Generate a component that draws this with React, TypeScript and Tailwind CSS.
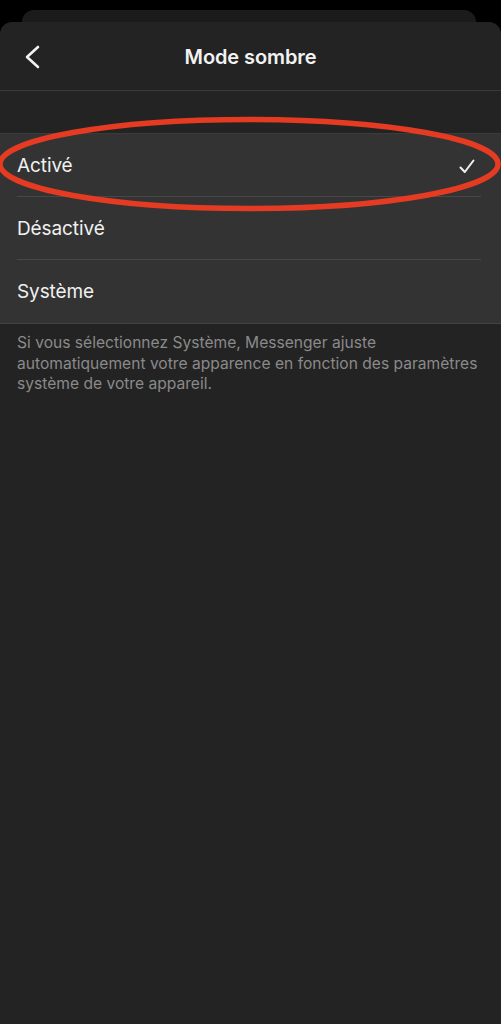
const options = [
  { label: 'Activé', selected: true },
  { label: 'Désactivé', selected: false },
  { label: 'Système', selected: false },
];

export default function App() {
  return (
    <div
      className="relative w-[501px] h-[1024px] bg-black overflow-hidden"
      style={{ fontFamily: 'Inter, "Noto Sans", sans-serif' }}
    >
      {/* Sheet behind */}
      <div className="absolute left-[22px] right-[25px] top-[10px] h-[40px] rounded-[12px] bg-[#1b1b1b]" />

      {/* Main sheet */}
      <div className="absolute inset-x-0 top-[22px] bottom-0 rounded-t-[12px] bg-[#232323] flex flex-col">
        {/* Header */}
        <div className="relative h-[69px] flex items-center justify-center border-b border-[#3a3a3a]">
          <button className="absolute left-[22px] top-[23px] text-white">
            <svg width="20" height="24" viewBox="0 0 20 24" fill="none">
              <path d="M16 2 L5 12 L16 22" stroke="#f2f2f2" strokeWidth="2.6" strokeLinecap="round" strokeLinejoin="round" />
            </svg>
          </button>
          <h1 className="pt-[2px] text-[20px] font-semibold text-[#f2f2f2] tracking-[-0.1px]">Mode sombre</h1>
        </div>

        {/* Spacer band */}
        <div className="h-[42px]" />

        {/* Options group */}
        <div className="bg-[#333333] border-t border-[#3b3b3b] border-b border-b-[#444444]">
          {options.map((opt, i) => {
            const last = i === options.length - 1;
            return (
              <div key={opt.label} className="pl-[17px] pr-[20px]">
                <div
                  className={
                    last
                      ? 'h-[63px] pt-[2px] flex items-center justify-between'
                      : 'h-[63px] pt-[2px] flex items-center justify-between border-b border-[#474747]'
                  }
                >
                  <span className="text-[19px] text-[#f0f0f0] tracking-[-0.1px]">{opt.label}</span>
                  {opt.selected && (
                    <svg width="16" height="15" viewBox="0 0 16 15" fill="none" className="mr-[6px]">
                      <path d="M1.5 8.5 L5.8 13 L14.5 1.5" stroke="#f0f0f0" strokeWidth="2" strokeLinecap="round" strokeLinejoin="round" />
                    </svg>
                  )}
                </div>
              </div>
            );
          })}
        </div>

        {/* Footer note */}
        <p className="px-[17px] pt-[9px] text-[15.6px] leading-[20.5px] text-[#8a8a8a]">
          Si vous sélectionnez Système, Messenger ajuste automatiquement votre apparence en fonction des paramètres système de votre appareil.
        </p>
      </div>

      {/* Red annotation ellipse */}
      <svg className="absolute left-0 top-0 pointer-events-none" width="501" height="260" viewBox="0 0 501 260">
        <ellipse cx="249" cy="164" rx="249" ry="44.5" fill="none" stroke="#e43b22" strokeWidth="5.5" />
      </svg>
    </div>
  );
}
